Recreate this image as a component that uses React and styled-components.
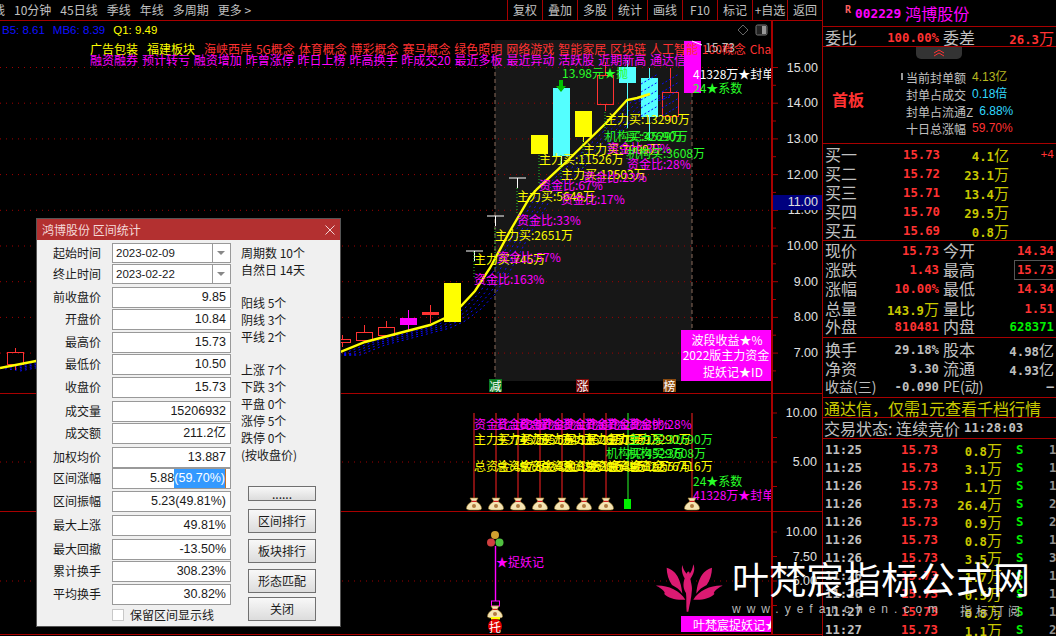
import React from "react";
import styled, { createGlobalStyle } from "styled-components";

const CJK = `"Noto Sans CJK SC", "Liberation Sans", sans-serif`;
const RED = "#ff3232";
const LINE = "#a80000";
const GRAY = "#c0c0c0";
const OLIVE = "#c8c800";
const MAGENTA = "#ff00ff";
const YELLOW = "#ffff00";
const GREEN = "#28ff28";
const CYAN = "#54ffff";

const GlobalStyle = createGlobalStyle`
  html, body { margin: 0; padding: 0; background: #000; }
  * { box-sizing: border-box; }
`;

const leftTabs = ["线", "10分钟", "45日线", "季线", "年线", "多周期", "更多 >"];
const rightTabs = ["复权", "叠加", "多股", "统计", "画线", "F10", "标记", "+自选", "返回"];

const priceTicks = [15, 14, 13, 12, 11, 10, 9, 8, 7].map((v, i) => ({ label: v.toFixed(2), y: 67.5 + i * 35.7 }));

const candles = [
  { x: 7, top: 352, bottom: 364, high: 348, low: 370, kind: "hollow" },
  { x: 334, top: 339, bottom: 342, high: 335, low: 347, kind: "hollow" },
  { x: 356, top: 332, bottom: 340, high: 325, low: 340, kind: "hollow" },
  { x: 378, top: 327, bottom: 335, high: 321, low: 335, kind: "hollow" },
  { x: 400, top: 318, bottom: 324, high: 310, low: 331, kind: "magenta" },
  { x: 422, top: 312, bottom: 314, high: 305, low: 323, kind: "cross" },
  { x: 444, top: 283, bottom: 321, high: 283, low: 321, kind: "yellow" },
  { x: 531, top: 135, bottom: 153, high: 135, low: 153, kind: "yellow" },
  { x: 553, top: 88, bottom: 155, high: 88, low: 165, kind: "cyan" },
  { x: 575, top: 111, bottom: 136, high: 111, low: 142, kind: "yellow" },
  { x: 597, top: 75, bottom: 104, high: 62, low: 111, kind: "hollow" },
  { x: 619, top: 67, bottom: 82, high: 60, low: 128, kind: "cyan" },
  { x: 641, top: 78, bottom: 116, high: 68, low: 140, kind: "cyan" },
  { x: 662, top: 92, bottom: 116, high: 68, low: 122, kind: "hollow" },
  { x: 684, top: 41, bottom: 92, high: 41, low: 92, kind: "magenta" },
];

const candleFill = { hollow: "none", cross: RED, magenta: MAGENTA, yellow: YELLOW, cyan: CYAN };
const candleStroke = { hollow: RED, cross: RED, magenta: MAGENTA, yellow: YELLOW, cyan: CYAN };

const tees = [
  { x: 466, y: 251, stem: 277 },
  { x: 487, y: 216, stem: 227 },
  { x: 509, y: 178, stem: 187 },
];

const trend = "0,368 36,361 340,352 365,342 430,325 445,318 461,306 475,291 490,268 510,231 530,197 537,189 563,165 607,122 627,100 637,98 650,94";

const conceptsRed = "海峡西岸 5G概念 体育概念 博彩概念 赛马概念 绿色照明 网络游戏 智能家居 区块链 人工智能 100概念 Cha";
const conceptsMagenta = "融资融券 预计转亏 融资增加 昨曾涨停 昨日上榜 昨高换手 昨成交20 最近多板 最近异动 活跃股 近期新高 通达信热";

const mainNotes = [
  { x: 90, y: 48, c: YELLOW, t: "广告包装" },
  { x: 147, y: 48, c: YELLOW, t: "福建板块" },
  { x: 204, y: 48, c: RED, t: conceptsRed, wide: true },
  { x: 90, y: 59, c: MAGENTA, t: conceptsMagenta, wide: true },
  { x: 705, y: 46, c: GRAY, t: "15.73" },
  { x: 562, y: 72, c: GREEN, t: "13.98元★抛" },
  { x: 605, y: 118, c: YELLOW, t: "主力买:13290万" },
  { x: 605, y: 135, c: GREEN, t: "机构买:4529万" },
  { x: 627, y: 135, c: GREEN, t: "买:32690万" },
  { x: 583, y: 148, c: YELLOW, t: "主力买:7999万" },
  { x: 607, y: 147, c: MAGENTA, t: "资金比:39%" },
  { x: 627, y: 152, c: GREEN, t: "机构买:3608万" },
  { x: 627, y: 163, c: MAGENTA, t: "资金比:28%" },
  { x: 539, y: 158, c: YELLOW, t: "主力买:11526万" },
  { x: 561, y: 173, c: YELLOW, t: "主力买:12503万" },
  { x: 583, y: 176, c: MAGENTA, t: "资金比:23%" },
  { x: 539, y: 184, c: MAGENTA, t: "资金比:67%" },
  { x: 517, y: 195, c: YELLOW, t: "主力买:5648万" },
  { x: 561, y: 198, c: MAGENTA, t: "资金比:17%" },
  { x: 517, y: 219, c: MAGENTA, t: "资金比:33%" },
  { x: 495, y: 234, c: YELLOW, t: "主力买:2651万" },
  { x: 474, y: 258, c: YELLOW, t: "主力买:745万" },
  { x: 497, y: 256, c: MAGENTA, t: "资金比:57%" },
  { x: 474, y: 278, c: MAGENTA, t: "资金比:163%" },
];

const connectors = [
  { x: 474, y1: 252, y2: 277 },
  { x: 495, y1: 228, y2: 270 },
  { x: 517, y1: 188, y2: 215 },
  { x: 539, y1: 155, y2: 184 },
  { x: 561, y1: 155, y2: 190 },
  { x: 583, y1: 140, y2: 170 },
  { x: 605, y1: 112, y2: 142 },
  { x: 627, y1: 128, y2: 160 },
];

const midLines = [474, 496, 518, 540, 562, 584, 606];
const midNotes = [
  ...["163", "57", "33", "17", "67", "23", "39"].map((v, i) => ({ x: midLines[i], y: 423, c: MAGENTA, t: `资金比:${v}%` })),
  { x: 628, y: 423, c: MAGENTA, t: "资金比:28%" },
  ...["745", "2651", "5648", "11526", "12503", "7999", "13290"].map((v, i) => ({ x: midLines[i], y: 438, c: YELLOW, t: `主力买:${v}万` })),
  { x: 628, y: 438, c: GREEN, t: "主力买:32690万" },
  { x: 606, y: 452, c: GREEN, t: "机构买:4529万" },
  { x: 628, y: 452, c: GREEN, t: "机构买:3608万" },
  ...["457", "8034", "33182", "19820", "18641", "34512", "16376"].map((v, i) => ({ x: midLines[i], y: 465, c: YELLOW, t: `总资金:${v}万` })),
  { x: 628, y: 465, c: YELLOW, t: "总资金:57416万" },
  { x: 693, y: 480, c: GREEN, t: "24★系数" },
];

const marks = [
  { x: 489, bg: "#0a7a20", t: "减" },
  { x: 576, bg: "#7a0a0a", t: "涨" },
  { x: 663, bg: "#8a4a10", t: "榜" },
];

const dialogRows = [
  { label: "起始时间", date: "2023-02-09", h: 21 },
  { label: "终止时间", date: "2023-02-22", h: 23 },
  { label: "前收盘价", value: "9.85", h: 22 },
  { label: "开盘价", value: "10.84", h: 23 },
  { label: "最高价", value: "15.73", h: 22 },
  { label: "最低价", value: "10.50", h: 23 },
  { label: "收盘价", value: "15.73", h: 24 },
  { label: "成交量", value: "15206932", h: 22 },
  { label: "成交额", value: "211.2亿", h: 24 },
  { label: "加权均价", value: "13.887", h: 21 },
  { label: "区间涨幅", value: "5.88", selected: "(59.70%)", h: 23 },
  { label: "区间振幅", value: "5.23(49.81%)", h: 24 },
  { label: "最大上涨", value: "49.81%", h: 24 },
  { label: "最大回撤", value: "-13.50%", h: 22 },
  { label: "累计换手", value: "308.23%", h: 23 },
  { label: "平均换手", value: "30.82%", h: 21 },
];

const statGroups = [
  ["周期数 10个", "自然日 14天"],
  ["阳线 5个", "阴线 3个", "平线 2个"],
  ["上涨 7个", "下跌 3个", "平盘 0个", "涨停 5个", "跌停 0个", "(按收盘价)"],
];

const dialogButtons = [
  { t: "......", h: 15, mt: 0 },
  { t: "区间排行", h: 24, mt: 8 },
  { t: "板块排行", h: 24, mt: 6 },
  { t: "形态匹配", h: 24, mt: 6 },
  { t: "关闭", h: 24, mt: 4 },
];

const sealRows = [
  { label: "当前封单额", value: "4.13亿", c: "#b8b820" },
  { label: "封单占成交", value: "0.18倍", c: "#30d8ff" },
  { label: "封单占流通Z", value: "6.88%", c: "#30d8ff" },
  { label: "十日总涨幅", value: "59.70%", c: RED },
];

const bids = [
  { label: "买一", price: "15.73", amount: "4.1", unit: "亿", extra: "+4" },
  { label: "买二", price: "15.72", amount: "23.1", unit: "万" },
  { label: "买三", price: "15.71", amount: "13.4", unit: "万" },
  { label: "买四", price: "15.70", amount: "29.5", unit: "万" },
  { label: "买五", price: "15.69", amount: "0.8", unit: "万" },
];

const quotes = [
  { a: "现价", av: "15.73", ac: RED, b: "今开", bv: "14.34", bc: RED },
  { a: "涨跌", av: "1.43", ac: RED, b: "最高", bv: "15.73", bc: RED, boxed: true },
  { a: "涨幅", av: "10.00%", ac: RED, b: "最低", bv: "14.34", bc: RED },
  { a: "总量", av: "143.9", au: "万", ac: OLIVE, b: "量比", bv: "1.51", bc: RED },
  { a: "外盘", av: "810481", ac: RED, b: "内盘", bv: "628371", bc: "#00f000" },
];

const funds = [
  { a: "换手", av: "29.18%", b: "股本", bv: "4.98", bu: "亿" },
  { a: "净资", av: "3.30", b: "流通", bv: "4.93", bu: "亿" },
  { a: "收益(三)", av: "-0.090", b: "PE(动)", bv: "—" },
];

const trades = [
  ["11:25", "0.8", "1"], ["11:25", "3.1", "1"], ["11:26", "1.1", "1"], ["11:26", "26.4", "2"],
  ["11:26", "0.9", "2"], ["11:26", "0.8", "1"], ["11:26", "3.5", "3"], ["11:26", "1.7", "1"],
  ["11:26", "0.5", "1"], ["11:27", "0.8", "1"], ["11:27", "1.1", "2"],
];

const Bag = ({ x, y }) => (
  <g transform={`translate(${x} ${y})`}>
    <path d="M-4 -11 L4 -11 L2 -7.5 C5.5 -6 7.5 -3 7.5 -0.5 C7.5 1 5 1 0 1 C-5 1 -7.5 1 -7.5 -0.5 C-7.5 -3 -5.5 -6 -2 -7.5Z" fill="#f5e4b4" stroke="#a88430" strokeWidth="0.6" />
    <rect x="-2.5" y="-8.2" width="5" height="1.2" fill="#d02020" />
    <circle cx="0" cy="-3" r="2" fill="#b07a40" />
  </g>
);

const Logo = () => (
  <LogoMark viewBox="0 0 240 195" aria-hidden="true">
    <g fill="#dc1a72">
      <path d="M50 38 C72 44 92 64 97 116 C90 104 78 96 66 90 C56 76 50 56 50 38Z" />
      <path d="M18 92 C50 90 90 106 106 134 C78 136 56 130 42 116 C50 116 38 100 18 92Z" />
      <path d="M186 38 C164 44 144 64 139 116 C146 104 158 96 170 90 C180 76 186 56 186 38Z" />
      <path d="M218 92 C186 90 146 106 130 134 C158 136 180 130 194 116 C186 116 198 100 218 92Z" />
      <path d="M97 30 C93 44 98 60 104 70 C98 88 100 102 108 114 C110 130 108 150 110 170 L115 170 C119 148 124 130 125 112 C128 96 123 84 121 72 C130 58 137 44 130 28 C128 42 123 52 119 56 C119 48 113 46 110 56 C104 50 99 42 97 30Z" />
    </g>
  </LogoMark>
);

const App = () => (
  <Page>
    <GlobalStyle />
    <Workspace>
      <Toolbar>
        <TabList>
          {leftTabs.map((t) => <Tab key={t}>{t}</Tab>)}
        </TabList>
        <ToolButtons>
          {rightTabs.map((t) => <ToolButton key={t}>{t}</ToolButton>)}
        </ToolButtons>
      </Toolbar>

      <Pane $h={372}>
        <IndexRow>
          <IndexValue $c="#1010ff">B5: 8.61</IndexValue>
          <IndexValue $c="#1010ff">MB6: 8.39</IndexValue>
          <IndexValue $c={YELLOW}>Q1: 9.49</IndexValue>
        </IndexRow>
        <ChartSvg width="822" height="372" viewBox="0 21 822 372">
          <defs>
            <clipPath id="plotArea"><rect x="0" y="0" width="771" height="636" /></clipPath>
          </defs>
          <rect x="495" y="40" width="197" height="341" fill="#171717" />
          {priceTicks.map((t) => (
            <GridLine key={t.label} x1="0" x2="771" y1={t.y} y2={t.y} />
          ))}
          <DashLine x1="495" x2="495" y1="65" y2="381" />
          <DashLine x1="692" x2="692" y1="65" y2="381" />

          {[[20, 3], [15, 2.2], [10, 1.6], [5, 1]].map(([dx, dy]) => (
            <polyline key={dx} points={trend} transform={`translate(${dx} ${dy})`} fill="none" stroke="#0a0aff" strokeWidth="1" strokeDasharray="2 3" />
          ))}

          {candles.map((c) => (
            <g key={c.x}>
              <line x1={c.x + 8.5} x2={c.x + 8.5} y1={c.high} y2={c.kind === "hollow" ? c.top : c.low} stroke={candleStroke[c.kind]} strokeWidth="1" />
              {c.kind === "hollow" && <line x1={c.x + 8.5} x2={c.x + 8.5} y1={c.bottom} y2={c.low} stroke={RED} />}
              <rect x={c.x + 0.5} y={c.top + 0.5} width="16" height={c.bottom - c.top} fill={candleFill[c.kind]} stroke={candleStroke[c.kind]} />
            </g>
          ))}
          {[[641, 78, 17, 38], [662, 92, 17, 24]].map(([x, y, w, h]) => (
            <g key={x}>
              {[0, 8, 16, 24, 32].map((o) => (
                <line key={o} x1={x} y1={y + h - o} x2={x + w} y2={y + h - o - 10} stroke="#0a0aff" strokeDasharray="2 2" />
              ))}
            </g>
          ))}
          <polyline points={trend} fill="none" stroke={YELLOW} strokeWidth="2.4" />

          {tees.map((t) => (
            <g key={t.x} stroke="#fff">
              <line x1={t.x} x2={t.x + 17} y1={t.y} y2={t.y} />
              <line x1={t.x + 8.5} x2={t.x + 8.5} y1={t.y} y2={t.y + 10} />
            </g>
          ))}
          {connectors.map((c) => (
            <line key={c.x} x1={c.x} x2={c.x} y1={c.y1} y2={c.y2} stroke="#28c828" strokeDasharray="1 2" />
          ))}
          <polyline points="692,41 702,45" fill="none" stroke="#fff" />
          <path d="M559 80 L563 80 L563 86 L566 86 L561 92 L556 86 L559 86Z" fill="#00c000" />

          {mainNotes.map((n, i) => (
            <Note key={i} x={n.x} y={n.y} $c={n.c} $wide={n.wide}>{n.t}</Note>
          ))}
          <Note x="693" y="73" $c="#fff" clipPath="url(#plotArea)">41328万★封单</Note>
          <Note x="693" y="87" $c={GREEN}>24★系数</Note>

          <rect x="681" y="330" width="90" height="51" fill={MAGENTA} />
          <Note x="727" y="339" $c="#fff" textAnchor="middle">波段收益★%</Note>
          <Note x="726" y="354" $c="#fff" textAnchor="middle">2022版主力资金</Note>
          <Note x="733" y="371" $c="#fff" textAnchor="middle">捉妖记★ID</Note>

          {marks.map((m) => (
            <g key={m.x}>
              <rect x={m.x} y="379" width="13" height="13" fill={m.bg} />
              <Note x={m.x + 0.5} y="385" $c="#fff">{m.t}</Note>
            </g>
          ))}

          <AxisLine x1="772" x2="772" y1="21" y2="393" />
          {priceTicks.map((t) => (
            <g key={t.label}>
              <line x1="772" x2="778" y1={t.y} y2={t.y} stroke={LINE} />
              <line x1="772" x2="776" y1={t.y + 17.8} y2={t.y + 17.8} stroke={LINE} />
              <AxisText x="818" y={t.y}>{t.label}</AxisText>
            </g>
          ))}
          <rect x="773" y="195" width="49" height="15" fill="#00007f" />
          <AxisText x="818" y="202">11.00</AxisText>

          <path d="M743 25 L748 30 L743 35 L738 30Z" fill="none" stroke="#666" />
          <rect x="756" y="25" width="11" height="10" rx="1.5" fill="#222" stroke="#777" />
          <rect x="762" y="26" width="4" height="8" fill="#999" />
        </ChartSvg>
      </Pane>

      <Pane $h={117}>
        <ChartSvg width="822" height="117" viewBox="0 394 822 117">
          <GridLine x1="0" x2="771" y1="462" y2="462" />
          {midLines.map((x) => (
            <line key={x} x1={x} x2={x} y1="413" y2="500" stroke="#ff2020" />
          ))}
          <line x1="628" x2="628" y1="413" y2="500" stroke="#28ff28" />
          <line x1="692" x2="692" y1="413" y2="500" stroke="#ff2020" />
          {midNotes.map((n, i) => (
            <Note key={i} x={n.x} y={n.y} $c={n.c}>{n.t}</Note>
          ))}
          <Note x="693" y="494" $c={MAGENTA} clipPath="url(#plotArea)">41328万★封单</Note>
          {midLines.map((x) => <Bag key={x} x={x} y={509} />)}
          <Bag x={692} y={509} />
          <rect x="624" y="499" width="7" height="10" fill="#00f000" />
          <AxisLine x1="772" x2="772" y1="394" y2="511" />
          {[413, 437.5, 462, 486.5].map((y) => (
            <line key={y} x1="772" x2="777" y1={y} y2={y} stroke={LINE} />
          ))}
          <AxisText x="817" y="413">10.00</AxisText>
          <AxisText x="817" y="462">5.00</AxisText>
        </ChartSvg>
      </Pane>

      <Pane $h={122}>
        <ChartSvg width="822" height="122" viewBox="0 511 822 122">
          <GridLine x1="0" x2="771" y1="580" y2="580" />
          <line x1="495.5" x2="495.5" y1="545" y2="600" stroke={MAGENTA} strokeWidth="1.4" />
          <circle cx="495" cy="534" r="4" fill="#d0a030" />
          <circle cx="491" cy="541.5" r="4" fill="#d04040" />
          <circle cx="499.5" cy="541.5" r="4" fill="#50c040" />
          <Note x="496" y="560" $c={MAGENTA}>★捉妖记</Note>
          <rect x="491.5" y="600" width="8" height="5" fill="none" stroke={MAGENTA} />
          <Bag x={495} y={616} />
          <rect x="491" y="616" width="9" height="2.5" fill={YELLOW} />
          <circle cx="495" cy="625" r="7" fill="#e00000" />
          <Note x="489" y="625" $c="#fff">托</Note>
          <AxisLine x1="772" x2="772" y1="511" y2="633" />
          {[531, 555.5, 580, 604.5].map((y) => (
            <line key={y} x1="772" x2="777" y1={y} y2={y} stroke={LINE} />
          ))}
          <AxisText x="817" y="531">10.00</AxisText>
          <AxisText x="817" y="556">7.50</AxisText>
          <AxisText x="817" y="580">5.00</AxisText>
          <rect x="681" y="615" width="90" height="16" fill={MAGENTA} />
          <Note x="693" y="623" $c="#fff" clipPath="url(#plotArea)">叶梵宸捉妖记★</Note>
        </ChartSvg>
      </Pane>

      <Dialog>
        <TitleBar>
          <span>鸿博股份 区间统计</span>
          <CloseMark viewBox="0 0 10 10" aria-hidden="true">
            <path d="M0.5 0.5 L9.5 9.5 M9.5 0.5 L0.5 9.5" stroke="#fff" strokeWidth="0.8" />
          </CloseMark>
        </TitleBar>
        <DialogBody>
          <FieldColumn>
            {dialogRows.map((r) => (
              <FieldRow key={r.label} $h={r.h}>
                <FieldLabel>{r.label}</FieldLabel>
                {r.date ? (
                  <DateBox>
                    <DateText>{r.date}</DateText>
                    <DateArrow />
                  </DateBox>
                ) : (
                  <ValueBox>
                    {r.value}
                    {r.selected && <Selected>{r.selected}</Selected>}
                  </ValueBox>
                )}
              </FieldRow>
            ))}
            <KeepRow>
              <CheckBox />
              保留区间显示线
            </KeepRow>
          </FieldColumn>
          <SideColumn>
            {statGroups.map((g) => (
              <StatGroup key={g[0]}>
                {g.map((s) => <StatLine key={s}>{s}</StatLine>)}
              </StatGroup>
            ))}
            <ButtonStack>
              {dialogButtons.map((b) => (
                <DialogButton key={b.t} $h={b.h} $mt={b.mt}>{b.t}</DialogButton>
              ))}
            </ButtonStack>
          </SideColumn>
        </DialogBody>
      </Dialog>
    </Workspace>

    <Panel>
      <StockHead>
        <RMark>R</RMark>
        <StockCode>002229</StockCode>
        <StockName>鸿博股份</StockName>
      </StockHead>
      <Section $h={20}>
        <QuoteRow>
          <Cell><Label>委比</Label><Num $c={RED}>100.00%</Num></Cell>
          <Cell><Label>委差</Label><Num $c={RED}>26.3<Unit>万</Unit></Num></Cell>
        </QuoteRow>
      </Section>
      <SealSection>
        <Handle>
          <svg width="12" height="8" viewBox="0 0 12 8" aria-hidden="true">
            <path d="M1 4 L6 1 L11 4 M1 7 L6 4 L11 7" fill="none" stroke={RED} />
          </svg>
        </Handle>
        <BoardTag>首板</BoardTag>
        <SealList>
          {sealRows.map((r) => (
            <SealRow key={r.label}>
              <SealLabel>{r.label}</SealLabel>
              <SealValue $c={r.c}>{r.value}</SealValue>
            </SealRow>
          ))}
        </SealList>
        <PinMark />
      </SealSection>
      <Section $h={97}>
        {bids.map((b) => (
          <BidRow key={b.label}>
            <Label>{b.label}</Label>
            <Num $c={RED}>{b.price}</Num>
            <Num $c={OLIVE}>{b.amount}<Unit>{b.unit}</Unit></Num>
            <Extra>{b.extra}</Extra>
          </BidRow>
        ))}
      </Section>
      <Section $h={97}>
        {quotes.map((q) => (
          <QuoteRow key={q.a}>
            <Cell><Label>{q.a}</Label><Num $c={q.ac}>{q.av}{q.au && <Unit>{q.au}</Unit>}</Num></Cell>
            <Cell><Label>{q.b}</Label><Num $c={q.bc} $boxed={q.boxed}>{q.bv}</Num></Cell>
          </QuoteRow>
        ))}
      </Section>
      <Section $h={60} $top={1}>
        {funds.map((q) => (
          <QuoteRow key={q.a}>
            <Cell><Label $small={q.a.length > 2}>{q.a}</Label><Num $c={GRAY}>{q.av}</Num></Cell>
            <Cell><Label $small={q.b.length > 2}>{q.b}</Label><Num $c={GRAY}>{q.bv}{q.bu && <Unit>{q.bu}</Unit>}</Num></Cell>
          </QuoteRow>
        ))}
      </Section>
      <NoticeRow>通达信，仅需1元查看千档行情</NoticeRow>
      <StateRow>
        交易状态: 连续竞价
        <Num $c={GRAY}>11:28:03</Num>
      </StateRow>
      <TradeList>
        {trades.map(([time, vol, n], i) => (
          <TradeRow key={i}>
            <Num $c={GRAY}>{time}</Num>
            <Num $c={RED}>15.73</Num>
            <Num $c={OLIVE}>{vol}<Unit>万</Unit></Num>
            <Num $c="#00f000">S</Num>
            <Num $c="#909090">{n}</Num>
          </TradeRow>
        ))}
      </TradeList>
    </Panel>

    <Watermark>
      <Logo />
      <WatermarkText>
        <WatermarkTitle>叶梵宸指标公式网</WatermarkTitle>
        <WatermarkSub>
          <span>www.yefanchen.com</span>
          <span>指标订阅</span>
        </WatermarkSub>
      </WatermarkText>
    </Watermark>
  </Page>
);

const Page = styled.div`
  position: relative;
  display: flex;
  width: 1056px;
  height: 636px;
  overflow: hidden;
  background: #000;
  font-family: ${CJK};
`;

const Workspace = styled.div`
  position: relative;
  width: 822px;
  flex: none;
`;

const Toolbar = styled.div`
  display: flex;
  justify-content: space-between;
  height: 21px;
  border-bottom: 1px solid ${LINE};
  color: ${GRAY};
  font-size: 12px;
  line-height: 20px;
`;

const TabList = styled.div`
  display: flex;
  gap: 9px;
  margin-left: -7px;
`;

const Tab = styled.span`
  white-space: nowrap;
`;

const ToolButtons = styled.div`
  display: flex;
`;

const ToolButton = styled.span`
  width: 35px;
  text-align: center;
  white-space: nowrap;
  border-left: 1px solid ${LINE};
`;

const Pane = styled.div`
  position: relative;
  height: ${(p) => p.$h + 1}px;
  border-bottom: 1px solid ${LINE};
`;

const IndexRow = styled.div`
  position: absolute;
  top: 2px;
  left: 2px;
  display: flex;
  gap: 8px;
  font-family: "Liberation Sans", sans-serif;
  font-size: 11.5px;
  line-height: 14px;
`;

const IndexValue = styled.span`
  color: ${(p) => p.$c};
`;

const ChartSvg = styled.svg`
  display: block;
`;

const GridLine = styled.line`
  stroke: #a00000;
  stroke-dasharray: 1 5;
`;

const DashLine = styled.line`
  stroke: #8a6a5a;
  stroke-dasharray: 4 3;
`;

const AxisLine = styled.line`
  stroke: ${LINE};
  stroke-width: 2;
`;

const Note = styled.text`
  fill: ${(p) => p.$c};
  font-family: ${CJK};
  font-size: 12px;
  word-spacing: ${(p) => (p.$wide ? 1.2 : 0)}px;
  dominant-baseline: central;
`;

const AxisText = styled.text`
  fill: #e0e0e0;
  font-family: "Liberation Sans", sans-serif;
  font-size: 12.5px;
  text-anchor: end;
  dominant-baseline: central;
`;

const Dialog = styled.div`
  position: absolute;
  top: 218px;
  left: 36px;
  width: 305px;
  height: 409px;
  display: flex;
  flex-direction: column;
  background: #f0f0f0;
  border: 1px solid #555;
  color: #1a1a1a;
  font-size: 12px;
`;

const TitleBar = styled.div`
  flex: none;
  height: 21px;
  padding: 0 5px;
  display: flex;
  align-items: center;
  justify-content: space-between;
  background: #b33030;
  color: #f4d8d8;
  line-height: 21px;
`;

const CloseMark = styled.svg`
  width: 10px;
  height: 10px;
`;

const DialogBody = styled.div`
  flex: 1;
  display: flex;
  padding: 3px 0 0 0;
`;

const FieldColumn = styled.div`
  width: 194px;
  flex: none;
  display: flex;
  flex-direction: column;
`;

const FieldRow = styled.div`
  display: flex;
  height: ${(p) => p.$h}px;
  flex: none;
  gap: 11px;
`;

const FieldLabel = styled.span`
  width: 64px;
  text-align: right;
  line-height: 20px;
  white-space: nowrap;
`;

const ValueBox = styled.div`
  width: 119px;
  height: 21px;
  padding-right: 4px;
  background: #fff;
  border: 1px solid #999;
  text-align: right;
  font-family: "Liberation Sans", "Noto Sans CJK SC", sans-serif;
  font-size: 12.5px;
  line-height: 19px;
  white-space: nowrap;
`;

const Selected = styled.span`
  display: inline-block;
  background: #3399ff;
  color: #fff;
  border-right: 1px solid #c87020;
`;

const DateBox = styled.div`
  width: 119px;
  height: 20px;
  display: flex;
  background: #fff;
  border: 1px solid #999;
`;

const DateText = styled.span`
  flex: 1;
  padding-left: 3px;
  border-right: 1px solid #999;
  font-family: "Liberation Sans", sans-serif;
  font-size: 11.5px;
  line-height: 18px;
`;

const DateArrow = styled.span`
  width: 17px;
  position: relative;
  &::after {
    content: "";
    position: absolute;
    left: 4px;
    top: 7px;
    border: 4px solid transparent;
    border-top: 4px solid #888;
    border-bottom: 0;
  }
`;

const KeepRow = styled.label`
  display: flex;
  align-items: center;
  gap: 6px;
  margin: 3px 0 0 75px;
  line-height: 14px;
`;

const CheckBox = styled.span`
  width: 12px;
  height: 12px;
  background: #fff;
  border: 1px solid #c8c8c8;
`;

const SideColumn = styled.div`
  flex: 1;
  display: flex;
  flex-direction: column;
  padding: 1px 0 5px 10px;
`;

const StatGroup = styled.div`
  margin-bottom: 16px;
`;

const StatLine = styled.div`
  height: 17px;
  line-height: 17px;
  white-space: nowrap;
`;

const ButtonStack = styled.div`
  margin-top: auto;
  padding-left: 7px;
`;

const DialogButton = styled.div`
  width: 68px;
  height: ${(p) => p.$h}px;
  margin-top: ${(p) => p.$mt}px;
  background: linear-gradient(#f8f8f8, #dcdcdc);
  border: 1px solid #707070;
  text-align: center;
  line-height: ${(p) => p.$h - 2}px;
`;

const Panel = styled.aside`
  width: 234px;
  flex: none;
  border-left: 1px solid ${LINE};
  color: ${GRAY};
  font-size: 16px;
  display: flex;
  flex-direction: column;
  overflow: hidden;
`;

const StockHead = styled.div`
  height: 27px;
  flex: none;
  padding-left: 22px;
  display: flex;
  align-items: center;
  border-bottom: 1px solid ${LINE};
`;

const RMark = styled.span`
  margin: -8px 4px 0 0;
  color: #ff6060;
  font: bold 10px "DejaVu Sans Mono", monospace;
`;

const StockCode = styled.span`
  color: ${MAGENTA};
  font: bold 12.8px "DejaVu Sans Mono", monospace;
`;

const StockName = styled.span`
  margin-left: 4px;
  color: ${MAGENTA};
  font-size: 16px;
  line-height: 20px;
`;

const Section = styled.div`
  height: ${(p) => p.$h}px;
  flex: none;
  padding-top: ${(p) => p.$top || 0}px;
  border-bottom: 1px solid ${LINE};
`;

const QuoteRow = styled.div`
  height: 19px;
  display: grid;
  grid-template-columns: 118px 114px;
  padding-left: 2px;
  line-height: 19px;
`;

const Cell = styled.div`
  display: flex;
  justify-content: space-between;
  align-items: center;
  padding-right: 3px;
  &:first-child { padding-right: 4px; }
`;

const Label = styled.span`
  font-size: ${(p) => (p.$small ? 14 : 16)}px;
  line-height: 19px;
  white-space: nowrap;
`;

const Num = styled.span`
  color: ${(p) => p.$c};
  font: bold 12.3px "DejaVu Sans Mono", monospace;
  white-space: nowrap;
  ${(p) => p.$boxed && `outline: 1px solid #555; outline-offset: 2px;`}
`;

const Unit = styled.span`
  font-family: ${CJK};
  font-size: 15px;
  font-weight: 400;
`;

const SealSection = styled.div`
  position: relative;
  height: 97px;
  flex: none;
  display: flex;
  align-items: center;
  padding-left: 9px;
  border-bottom: 1px solid ${LINE};
`;

const Handle = styled.div`
  position: absolute;
  top: 0;
  left: 93px;
  width: 46px;
  height: 12px;
  border-radius: 0 0 5px 5px;
  background: #333;
  display: flex;
  align-items: center;
  justify-content: center;
`;

const BoardTag = styled.span`
  color: ${RED};
  font-size: 16px;
  font-weight: 700;
  margin-top: 7px;
`;

const SealList = styled.div`
  position: absolute;
  top: 22px;
  left: 83px;
`;

const SealRow = styled.div`
  display: flex;
  height: 17px;
  gap: 6px;
  font-size: 12px;
  line-height: 17px;
`;

const SealLabel = styled.span`
  white-space: nowrap;
`;

const SealValue = styled.span`
  color: ${(p) => p.$c};
  font-family: "Liberation Sans", "Noto Sans CJK SC", sans-serif;
  font-size: 12px;
`;

const PinMark = styled.span`
  position: absolute;
  top: 26px;
  left: 78px;
  width: 2px;
  height: 7px;
  background: #999;
`;

const BidRow = styled.div`
  height: 19px;
  display: grid;
  grid-template-columns: 78px 35px 71px 45px;
  padding-left: 2px;
  align-items: center;
  line-height: 19px;
  > :nth-child(3) { text-align: right; }
`;

const Extra = styled.span`
  text-align: right;
  color: ${RED};
  font: 11px "DejaVu Sans Mono", monospace;
`;

const NoticeRow = styled.div`
  height: 20px;
  flex: none;
  color: ${OLIVE};
  padding-left: 1px;
  font-size: 16px;
  line-height: 20px;
  white-space: nowrap;
  border-bottom: 1px solid ${LINE};
`;

const StateRow = styled.div`
  height: 21px;
  flex: none;
  display: flex;
  align-items: center;
  gap: 4px;
  padding-left: 1px;
  font-size: 16px;
  white-space: nowrap;
  border-bottom: 1px solid ${LINE};
`;

const TradeList = styled.div`
  flex: 1;
`;

const TradeRow = styled.div`
  height: 18px;
  display: grid;
  grid-template-columns: 76px 35px 66px 34px 20px;
  align-items: center;
  padding-left: 2px;
  line-height: 18px;
  > :nth-child(3) { text-align: right; }
  > :nth-child(4) { padding-left: 14px; }
  > :nth-child(5) { padding-left: 13px; }
`;

const Watermark = styled.div`
  position: absolute;
  top: 555px;
  left: 650px;
  display: flex;
  gap: 2px;
  pointer-events: none;
`;

const LogoMark = styled.svg`
  width: 80px;
  height: 65px;
  flex: none;
`;

const WatermarkText = styled.div`
  display: flex;
  flex-direction: column;
`;

const WatermarkTitle = styled.div`
  color: #fff;
  font-size: 37px;
  line-height: 46px;
  letter-spacing: 0.3px;
  white-space: nowrap;
`;

const WatermarkSub = styled.div`
  display: flex;
  gap: 16px;
  margin-top: 1px;
  color: #b8b8b8;
  font: 12px "Liberation Sans", "Noto Sans CJK SC", sans-serif;
  letter-spacing: 6px;
  white-space: nowrap;
  > :last-child { letter-spacing: 4px; }
`;

export default App;
